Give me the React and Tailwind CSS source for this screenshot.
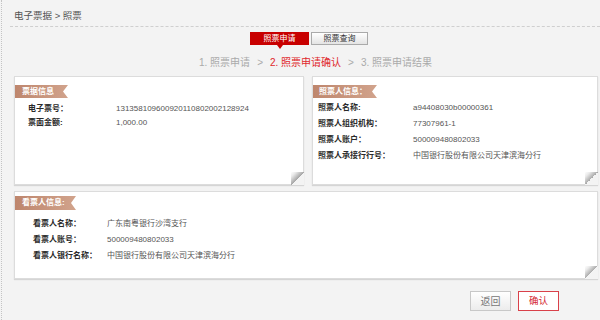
import React from 'react';

const drawer = {
  number: '131358109600920110802002128924',
  amount: '1,000.00',
};

const payee = [
  ['照票人名称:', 'a94408030b00000361'],
  ['照票人组织机构：', '77307961-1'],
  ['照票人账户：', '500009480802033'],
  ['照票人承接行行号：', '中国银行股份有限公司天津滨海分行'],
];

const viewer = [
  ['看票人名称：', '广东南粤银行沙湾支行'],
  ['看票人账号：', '500009480802033'],
  ['看票人银行名称：', '中国银行股份有限公司天津滨海分行'],
];

// 缎带标题（右侧燕尾）
const Ribbon = ({ children, className }) => (
  <div
    className={`h-[13px] bg-gradient-to-r from-[#be866d] to-[#d1a38c] text-[8px] font-bold leading-[13px] text-white [clip-path:polygon(0_0,100%_0,calc(100%-5px)_50%,100%_100%,0_100%)] ${className}`}
  >
    {children}
  </div>
);

// 卡片右下角的卷角
const Curl = () => (
  <div className="absolute -bottom-px -right-px h-[13px] w-[13px] bg-[linear-gradient(315deg,#f3f3f3_0,#f3f3f3_50%,#a8a8a8_50%,#e9e9e9_80%,#ffffff_100%)]" />
);

const Card = ({ className, children }) => (
  <div className={`relative border border-[#dcdcdc] bg-white shadow-[0_1px_1px_rgba(0,0,0,0.12)] ${className}`}>
    {children}
    <Curl />
  </div>
);

const Rows = ({ rows, labelW, className, leading }) => (
  <div className={`grid text-[8px] ${className}`} style={{ gridTemplateColumns: `${labelW}px 1fr` }}>
    {rows.map(([k, v]) => (
      <React.Fragment key={k}>
        <span className={`font-semibold text-[#2a2a2a] ${leading}`}>{k}</span>
        <span className={`text-[#555] ${leading}`}>{v}</span>
      </React.Fragment>
    ))}
  </div>
);

export default function App() {
  return (
    <div className="min-h-[320px] w-[600px] bg-[#f3f3f3] font-['Liberation_Sans','Noto_Sans_CJK_SC',sans-serif]">
      <div className="ml-px min-h-[320px] border-l border-dotted border-[#c4c4c4]">
        {/* 面包屑 */}
        <div className="ml-[8px] border-b border-dashed border-[#cfcfcf] pb-[4px] pl-[4px] pt-[9px] text-[9.5px] leading-[13px] text-[#555]">
          电子票据 &gt; 照票
        </div>

        {/* 标签页 */}
        <div className="mt-[5px] flex pl-[248px]">
          <div className="relative h-[13px] w-[59px] bg-[#c80000] text-center text-[8px] leading-[13px] text-white">
            照票申请
            <span className="absolute -bottom-[4px] left-1/2 -translate-x-1/2 border-x-[3px] border-t-[4px] border-x-transparent border-t-[#c80000]" />
          </div>
          <div className="ml-[2px] h-[13px] w-[57px] border border-[#aaa] bg-gradient-to-b from-white to-[#e4e4e4] text-center text-[8px] leading-[11px] text-[#333]">
            照票查询
          </div>
        </div>

        {/* 步骤 */}
        <div className="mt-[12px] flex gap-[7px] pl-[197px] text-[10px] leading-[12px] text-[#aaa]">
          <span>1. 照票申请</span>
          <span>&gt;</span>
          <span className="text-[#e0282c]">2. 照票申请确认</span>
          <span>&gt;</span>
          <span>3. 照票申请结果</span>
        </div>

        {/* 信息卡片 */}
        <div className="mt-[7px] pl-[12px] pr-[2px]">
          <div className="flex gap-[8px]">
            <Card className="h-[109px] w-[290px]">
              <Ribbon className="mt-[8px] w-[53px] pl-[7px]">票据信息</Ribbon>
              <Rows
                rows={[['电子票号：', drawer.number], ['票面金额:', drawer.amount]]}
                labelW={88}
                leading="leading-[14px]"
                className="mt-[4px] pl-[13px]"
              />
            </Card>
            <Card className="h-[109px] flex-1">
              <Ribbon className="mt-[8px] w-[64px] pl-[6px]">照票人信息：</Ribbon>
              <Rows rows={payee} labelW={95} leading="leading-[16px]" className="mt-[2px] pl-[5px]" />
            </Card>
          </div>

          <Card className="mt-[6px] h-[88px]">
            <Ribbon className="mt-[4px] h-[14px] w-[61px] pl-[7px] leading-[14px]">看票人信息:</Ribbon>
            <Rows rows={viewer} labelW={74} leading="leading-[16px]" className="mt-[6px] pl-[18px]" />
          </Card>

          {/* 按钮 */}
          <div className="mt-[12px] flex justify-end gap-[7px] pr-[39px]">
            <button className="h-[20px] w-[41px] border border-[#c8c8c8] bg-gradient-to-b from-white to-[#ececec] text-[10px] text-[#777]">
              返回
            </button>
            <button className="h-[20px] w-[41px] border border-[#d9414a] bg-white text-[9.5px] text-[#d42630]">
              确认
            </button>
          </div>
        </div>
      </div>
    </div>
  );
}
